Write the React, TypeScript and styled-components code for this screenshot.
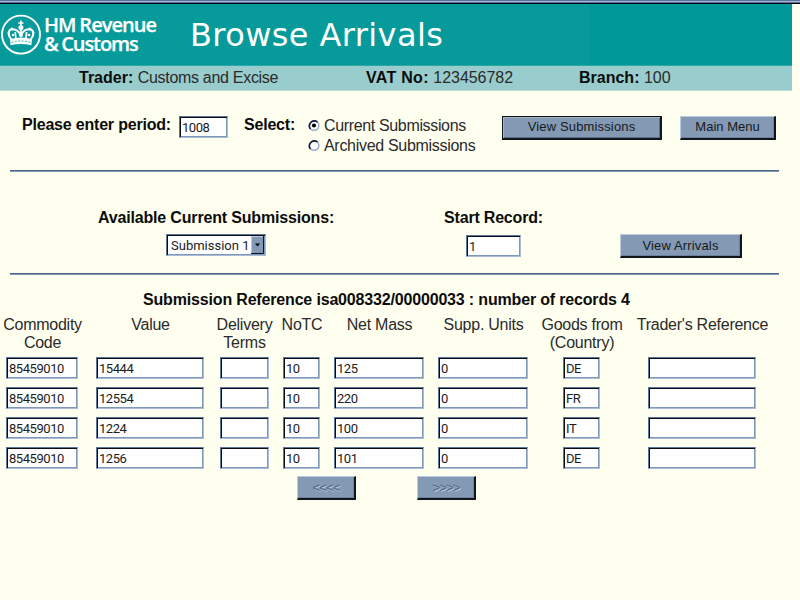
import React from "react";
import styled, { createGlobalStyle } from "styled-components";

const Global = createGlobalStyle`
  *, *::before, *::after { box-sizing: border-box; }
  body { margin: 0; background: #fffff0; overflow: hidden; }
`;

const sans = `"Liberation Sans", Arial, sans-serif`;

const Page = styled.div`
  width: 800px;
  height: 600px;
  background: #fffff0;
  color: #111;
  font-family: ${sans};
  font-size: 16px;
  line-height: 18px;
  white-space: nowrap;
`;

const WindowEdge = styled.div`
  height: 4px;
  background: linear-gradient(#5c6f98 0 1px, #a9b9d8 1px 2px, #566a93 2px 3px, #000014 3px 4px);
`;

const Banner = styled.header`
  display: flex;
  width: 792px;
  height: 62px;
  background: linear-gradient(to right, #069a9a 589px, #009898 589px);
  border-bottom: 1px solid #2aa8a8;
  color: #fff;
`;

const Crest = styled.svg`
  flex: none;
  width: 44px;
  height: 56px;
  margin-top: 3px;
`;

const Brand = styled.div`
  width: 146px;
  padding-top: 11px;
  font: 600 20px/19px "Open Sans", sans-serif;
  -webkit-text-stroke: 0.25px #fff;
`;

const BrandLine = styled.div<{ $spacing: number }>`
  letter-spacing: ${(p) => p.$spacing}px;
  word-spacing: -0.5px;
`;

const Title = styled.h1`
  margin: 0;
  padding-top: 12px;
  font: 400 32px/38px "DejaVu Sans", Verdana, sans-serif;
  letter-spacing: 0.4px;
`;

const TraderBar = styled.div`
  display: grid;
  grid-template-columns: 287px 213px 1fr;
  width: 792px;
  height: 25px;
  padding: 3px 0 0 79px;
  background: #99cccc;
  border-bottom: 1px solid #b9dcd6;
`;

const Text = styled.span<{ $spacing?: number; $bold?: boolean }>`
  font-weight: ${(p) => (p.$bold ? 700 : 400)};
  letter-spacing: ${(p) => p.$spacing ?? 0}px;
  color: ${(p) => (p.$bold ? "#0c0c0c" : "#2a2a2a")};
`;

const PeriodForm = styled.form`
  display: flex;
  align-items: flex-start;
  height: 79px;
  padding: 24px 0 0 22px;
`;

const PeriodLabel = styled.label`
  display: flex;
  width: 222px;
  justify-content: space-between;
  padding-right: 16px;
  align-items: flex-start;
  padding-top: 1px;
`;

const Field = styled.input<{ $width: number }>`
  display: block;
  width: ${(p) => p.$width}px;
  height: 22px;
  margin: 0;
  padding: 0 0 0 2px;
  border: 1px solid;
  border-color: #5d7596 #a9bdd8 #a9bdd8 #5d7596;
  border-radius: 0;
  outline: none;
  background: #fff;
  box-shadow: inset 1px 1px #0a0d18, inset -1px -1px #8098b8;
  color: #1c1c1c;
  font: 13px/18px Roboto, sans-serif;
  letter-spacing: -0.45px;
`;

const Choices = styled.div`
  display: flex;
  flex-direction: column;
  gap: 2px;
  width: 194px;
  padding-top: 2px;
`;

const Choice = styled.label`
  display: flex;
  align-items: center;
  height: 18px;
  gap: 4px;
`;

const SelectText = styled.div`
  width: 64px;
  padding-top: 1px;
`;

const Button = styled.button<{
  $width: number;
  $spacing?: number;
  $primary?: boolean;
  $muted?: boolean;
  $raise?: number;
}>`
  width: ${(p) => p.$width}px;
  height: 24px;
  padding: 0 0 ${(p) => p.$raise ?? 0}px;
  background: #8399b4;
  border: solid;
  border-width: 1px 2px 2px 1px;
  border-color: ${(p) => (p.$primary ? "#10151b" : "#bccbdc #10151b #10151b #bccbdc")};
  border-radius: 0;
  box-shadow: ${(p) =>
    p.$primary ? "inset 1px 1px #a3b5c4, inset -1px -1px #5d738e" : "inset -1px -1px #6b819d"};
  color: ${(p) => (p.$muted ? "#506784" : "#161a20")};
  text-shadow: ${(p) => (p.$muted ? "1px 1px #bccbdc" : "none")};
  font: 13px/18px ${sans};
  letter-spacing: ${(p) => p.$spacing ?? 0.15}px;
`;

const Actions = styled.div`
  display: flex;
  gap: 18px;
  padding-top: 1px;
`;

const Rule = styled.hr`
  width: 769px;
  height: 2px;
  margin: 0 0 0 10px;
  border: 0;
  background: linear-gradient(#4b648a 50%, #8399b8 50%);
`;

const ArrivalsForm = styled.form`
  display: grid;
  grid-template-columns: 236px 100px 1fr;
  column-gap: 110px;
  height: 101px;
  padding: 36px 0 0 98px;
`;

const Stack = styled.div<{ $width: number; $gap: number }>`
  display: flex;
  flex-direction: column;
  align-items: center;
  width: ${(p) => p.$width}px;
  padding-top: 1px;
  gap: ${(p) => p.$gap}px;
`;

const Picker = styled.div`
  display: flex;
  width: 100px;
  height: 22px;
  padding: 1px;
  border: 1px solid;
  border-color: #5d7596 #a9bdd8 #a9bdd8 #5d7596;
  background: #fff;
  box-shadow: inset 1px 1px #0a0d18, inset -1px -1px #8098b8;
  color: #1c1c1c;
  font: 13px/19px Roboto, sans-serif;
`;

const PickerValue = styled.span`
  flex: 1;
  padding-left: 3px;
`;

const PickerArrow = styled.svg`
  width: 13px;
  height: 18px;
`;

const ArrivalsAction = styled.div`
  margin-left: -34px;
  padding-top: 26px;
`;

const Caption = styled.h2`
  margin: 0;
  padding: 16px 0 0 143px;
  height: 41px;
  font-size: 16px;
  line-height: 18px;
`;

const Table = styled.div`
  display: grid;
  grid-template-columns: 84px 132px 56px 59px 96px 112px 85px 156px;
  justify-items: center;
`;

const HeadCell = styled.div`
  height: 41px;
  padding-left: 1px;
  text-align: center;
  letter-spacing: -0.25px;
  color: #2a2a2a;
`;

const Cell = styled.div`
  height: 30px;
`;

const Pager = styled.nav`
  display: flex;
  gap: 61px;
  padding: 0 0 0 297px;
  margin-top: -1px;
`;

const columns = [
  { title: ["Commodity", "Code"], width: 72 },
  { title: ["Value"], width: 108 },
  { title: ["Delivery", "Terms"], width: 49 },
  { title: ["NoTC"], width: 37 },
  { title: ["Net Mass"], width: 90 },
  { title: ["Supp. Units"], width: 90 },
  { title: ["Goods from", "(Country)"], width: 37 },
  { title: ["Trader's Reference"], width: 108 },
];

const records = [
  ["85459010", "15444", "", "10", "125", "0", "DE", ""],
  ["85459010", "12554", "", "10", "220", "0", "FR", ""],
  ["85459010", "1224", "", "10", "100", "0", "IT", ""],
  ["85459010", "1256", "", "10", "101", "0", "DE", ""],
];

function CrownCrest() {
  return (
    <Crest viewBox="0 0 44 56" fill="none" stroke="#fff">
      <circle cx="21" cy="27.6" r="19" strokeWidth="1.9" />
      <path
        d="M11.5 33 9 28.5Q7.5 23 12 22.3Q17.5 22 20.8 28Q24 22 29.7 22.3Q34.5 23 33 28.5L30.5 33"
        strokeWidth="2"
      />
      <path d="M20.9 13.5v14M18.3 16h5.2M15.2 25l.6 6M26.6 25l-.6 6" strokeWidth="1.7" />
      <path d="M10 32.3Q21 28.8 32 32.3L31.4 38.2Q21 35.8 10.6 38.2Z" fill="#fff" stroke="none" />
      <path d="M11.5 35.4Q21 32.4 30.5 35.4" stroke="#069a9a" strokeWidth=".8" strokeDasharray="2 1.4" />
      <g fill="#fff" stroke="none">
        <circle cx="20.9" cy="20.5" r="2.5" />
        <circle cx="20.9" cy="28" r="2.1" />
        <circle cx="12" cy="22" r="1.6" />
        <circle cx="29.8" cy="22" r="1.6" />
        <circle cx="8.9" cy="26" r="1.3" />
        <circle cx="33.1" cy="26" r="1.3" />
        <circle cx="13" cy="28" r="1.3" />
        <circle cx="29" cy="28" r="1.3" />
      </g>
    </Crest>
  );
}

const RadioIcon = styled.svg`
  flex: none;
  width: 12px;
  height: 12px;
`;

function Radio({ on }: { on?: boolean }) {
  return (
    <RadioIcon viewBox="0 0 12 12" fill="none">
      <circle cx="6" cy="5.5" r="4.8" fill="#fff" stroke="#9aaecb" strokeWidth="1.5" />
      <path d="M2.5 9A5 5 0 0 1 9.5 2" stroke="#1a2333" strokeWidth="1.6" />
      {on && <circle cx="6" cy="5.5" r="2.1" fill="#000" />}
    </RadioIcon>
  );
}

export default function App() {
  return (
    <Page>
      <Global />
      <WindowEdge />
      <Banner>
        <CrownCrest />
        <Brand>
          <BrandLine $spacing={-0.95}>HM Revenue</BrandLine>
          <BrandLine $spacing={-1.1}>&amp; Customs</BrandLine>
        </Brand>
        <Title>Browse Arrivals</Title>
      </Banner>
      <TraderBar>
        <div><Text $bold>Trader:</Text> <Text $spacing={-0.3}>Customs and Excise</Text></div>
        <div><Text $bold $spacing={0.3}>VAT No:</Text> <Text $spacing={-0.03}>123456782</Text></div>
        <div><Text $bold>Branch:</Text> <Text>100</Text></div>
      </TraderBar>
      <PeriodForm>
        <PeriodLabel>
          <Text $bold $spacing={-0.2}>Please enter period:</Text>
          <Field $width={49} defaultValue="1008" />
        </PeriodLabel>
        <SelectText><Text $bold $spacing={-0.2}>Select:</Text></SelectText>
        <Choices>
          <Choice><Radio on /><Text $spacing={-0.35}>Current Submissions</Text></Choice>
          <Choice><Radio /><Text $spacing={-0.3}>Archived Submissions</Text></Choice>
        </Choices>
        <Actions>
          <Button type="button" $width={160} $raise={2} $primary>View Submissions</Button>
          <Button type="button" $width={96} $raise={2} $spacing={0}>Main Menu</Button>
        </Actions>
      </PeriodForm>
      <Rule />
      <ArrivalsForm>
        <Stack $width={236} $gap={7}>
          <Text $bold $spacing={-0.17}>Available Current Submissions:</Text>
          <Picker>
            <PickerValue>Submission 1</PickerValue>
            <PickerArrow viewBox="0 0 13 18">
              <rect width="13" height="18" fill="#8399b4" />
              <path d="M.5 17V.5H12" fill="none" stroke="#bccbdc" />
              <path d="M12.5 0V17.5H0" fill="none" stroke="#10151b" />
              <path d="M4 7.5h5L6.5 10.5z" fill="#000" />
            </PickerArrow>
          </Picker>
        </Stack>
        <Stack $width={99} $gap={8}>
          <Text $bold $spacing={-0.2}>Start Record:</Text>
          <Field $width={55} defaultValue="1" />
        </Stack>
        <ArrivalsAction>
          <Button type="button" $width={122}>View Arrivals</Button>
        </ArrivalsAction>
      </ArrivalsForm>
      <Rule />
      <Caption>
        <Text $bold $spacing={-0.17}>
          Submission Reference isa008332/00000033 : number of records 4
        </Text>
      </Caption>
      <Table>
        {columns.map((c) => (
          <HeadCell key={c.title[0]}>
            {c.title.map((line) => <div key={line}>{line}</div>)}
          </HeadCell>
        ))}
        {records.flatMap((r, i) =>
          r.map((value, j) => (
            <Cell key={`${i}-${j}`}>
              <Field $width={columns[j].width} defaultValue={value} />
            </Cell>
          ))
        )}
      </Table>
      <Pager>
        <Button type="button" $width={59} $spacing={-0.8} $muted>&lt;&lt;&lt;&lt;</Button>
        <Button type="button" $width={59} $spacing={-0.8} $muted>&gt;&gt;&gt;&gt;</Button>
      </Pager>
    </Page>
  );
}
